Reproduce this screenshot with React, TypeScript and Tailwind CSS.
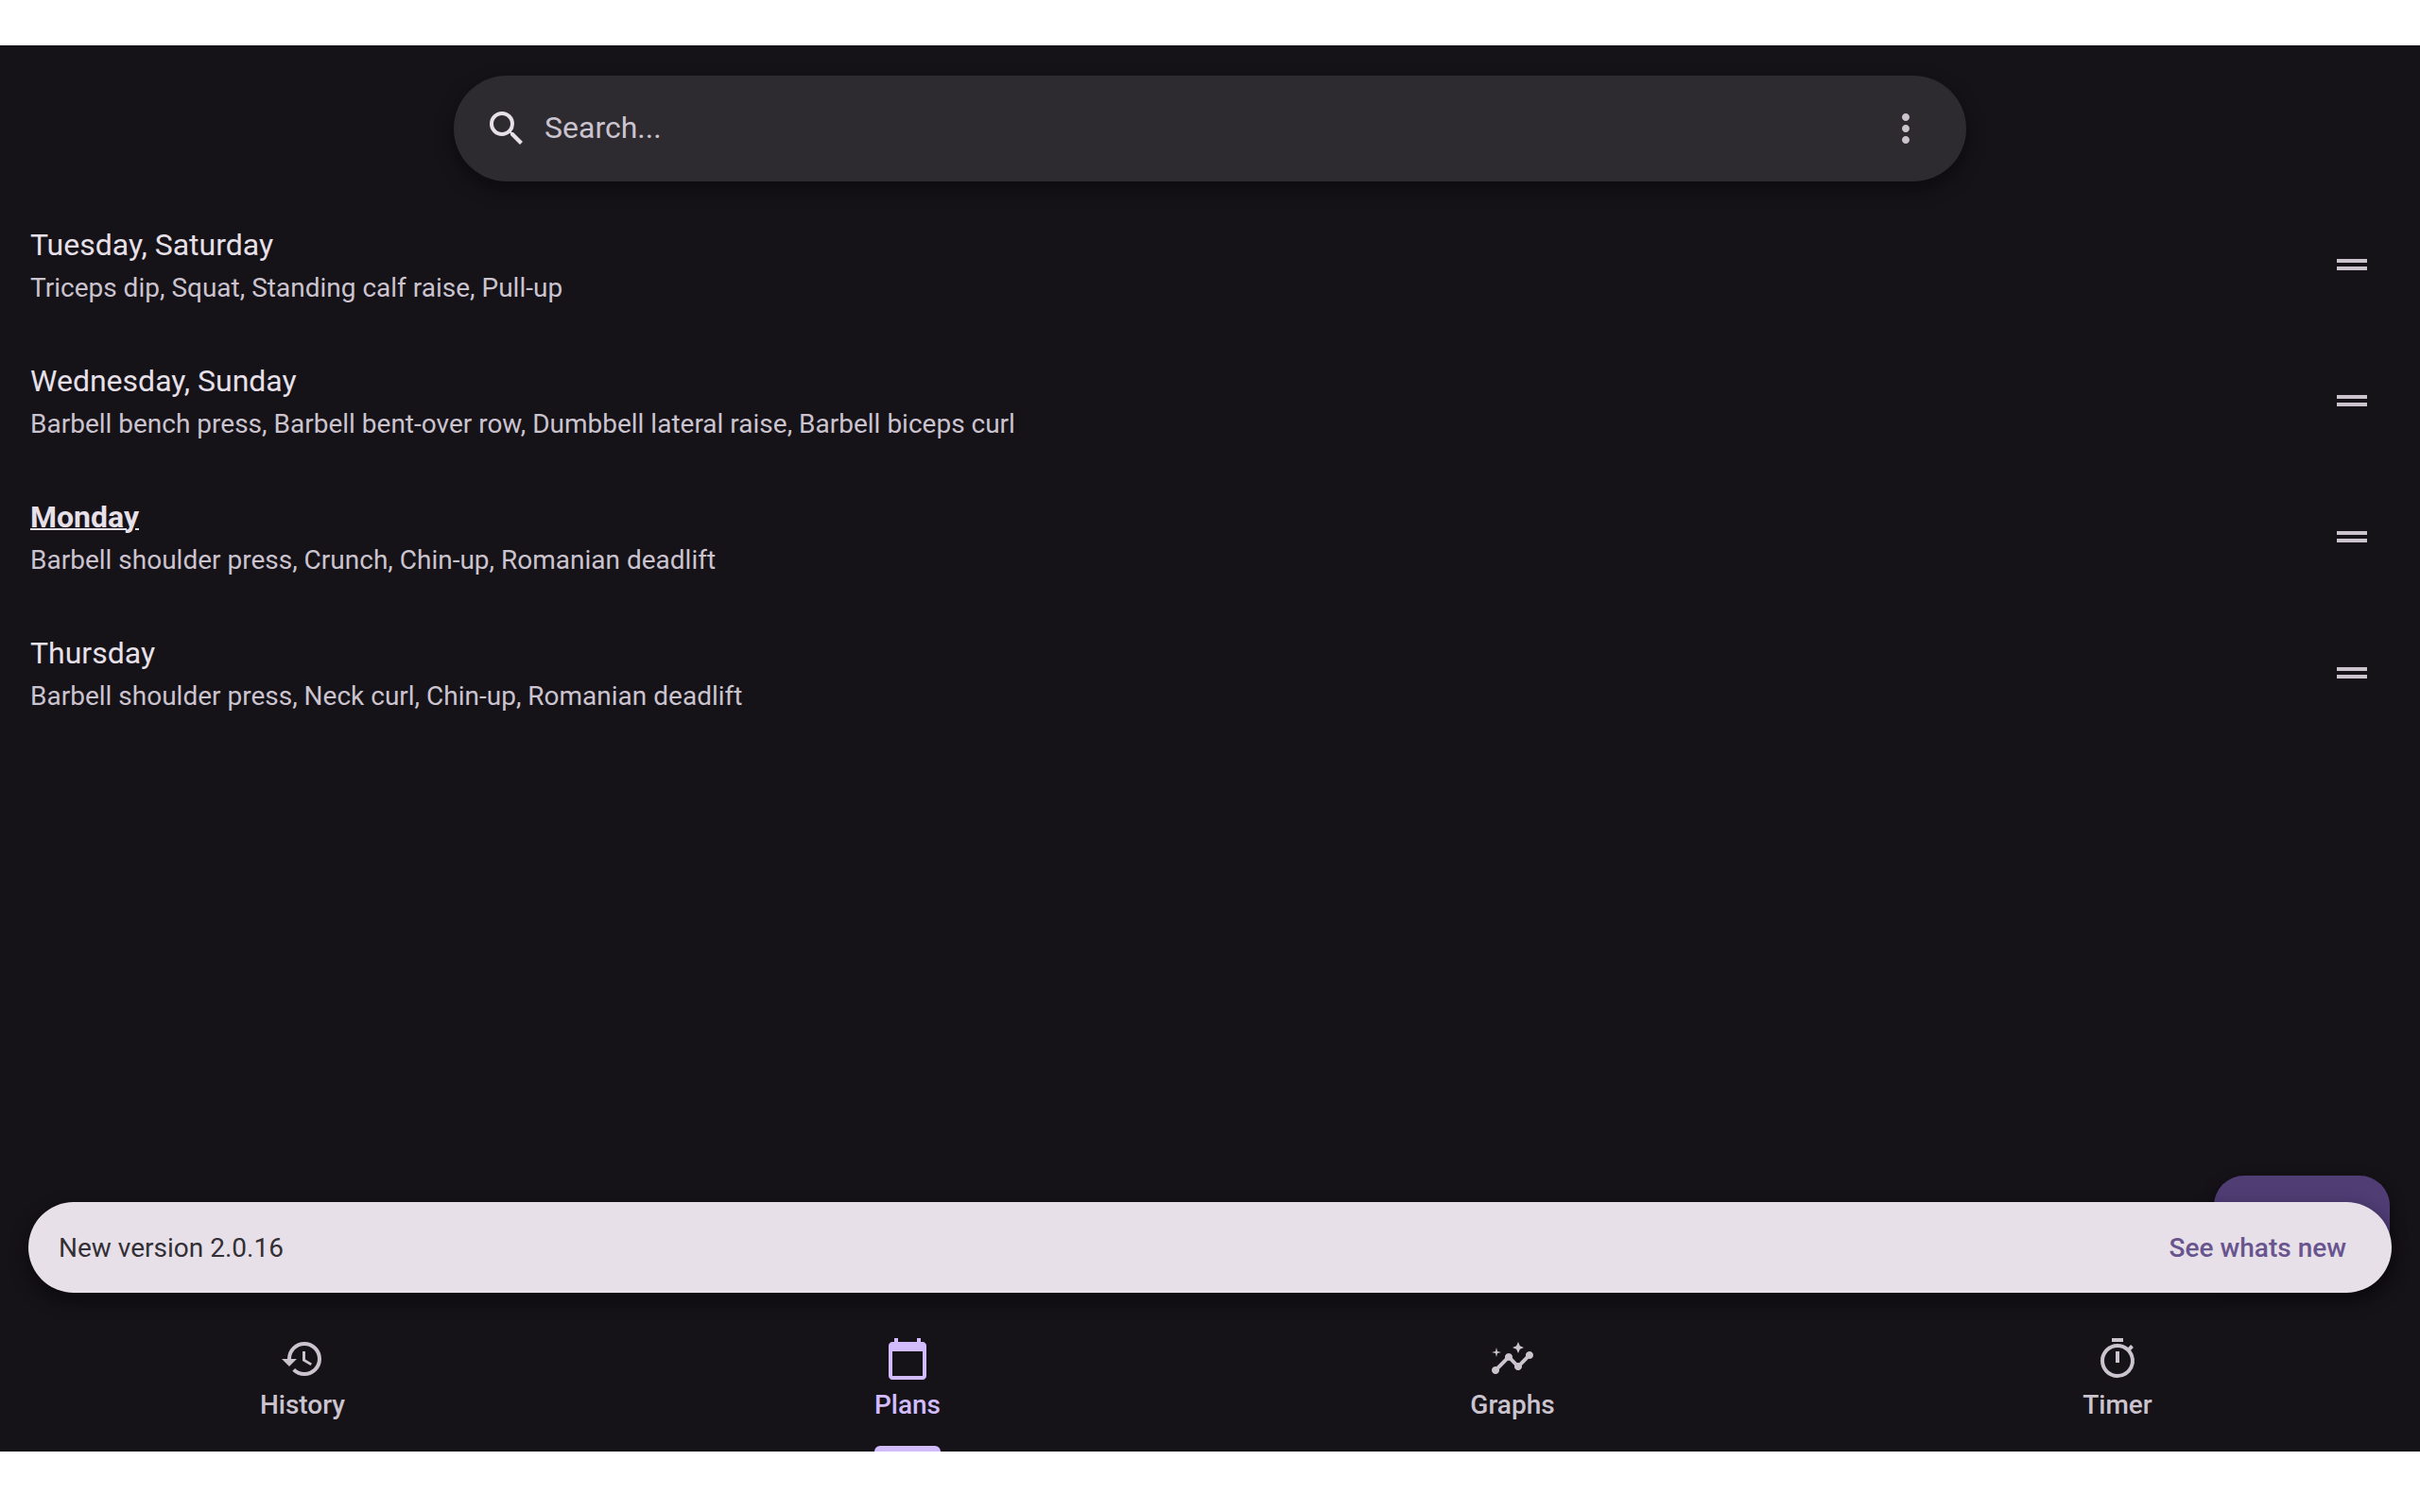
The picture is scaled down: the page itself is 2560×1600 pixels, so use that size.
import type { ReactNode } from "react";
import {
  MdCalendarToday,
  MdDragHandle,
  MdHistory,
  MdInsights,
  MdMoreVert,
  MdOutlineTimer,
  MdSearch,
} from "react-icons/md";

type Plan = { days: string; exercises: string; today?: boolean };

const plans: Plan[] = [
  { days: "Tuesday, Saturday", exercises: "Triceps dip, Squat, Standing calf raise, Pull-up" },
  {
    days: "Wednesday, Sunday",
    exercises: "Barbell bench press, Barbell bent-over row, Dumbbell lateral raise, Barbell biceps curl",
  },
  { days: "Monday", exercises: "Barbell shoulder press, Crunch, Chin-up, Romanian deadlift", today: true },
  { days: "Thursday", exercises: "Barbell shoulder press, Neck curl, Chin-up, Romanian deadlift" },
];

function SearchBar() {
  return (
    <div className="mx-auto flex h-28 w-full max-w-[1600px] items-center rounded-full bg-[#2d2a30] pr-10 pl-8 shadow-[0_8px_20px_rgba(0,0,0,0.4)]">
      <MdSearch className="size-12 shrink-0 text-[#e7e0e8]" aria-hidden="true" />
      <input
        type="text"
        aria-label="Search plans"
        placeholder="Search..."
        className="ml-4 h-12 min-w-0 flex-1 bg-transparent pb-0.5 text-[32px] text-[#e7e0e8] outline-none placeholder:text-[#cbc4cf]"
      />
      <button type="button" aria-label="More options" className="text-[#cbc4cf]">
        <MdMoreVert className="size-12" />
      </button>
    </div>
  );
}

function PlanRow({ plan }: { plan: Plan }) {
  return (
    <li className="flex h-36 items-center pr-12 pl-8">
      <div className="min-w-0 flex-1">
        <h2
          className={
            plan.today
              ? "text-[32px] leading-[48px] font-bold text-[#e7e0e8] underline decoration-2"
              : "text-[32px] leading-[48px] font-normal text-[#e7e0e8]"
          }
        >
          {plan.days}
        </h2>
        <p className="mt-0.5 text-[28px] leading-10 text-[#cbc4cf]">{plan.exercises}</p>
      </div>
      <button type="button" aria-label={`Reorder ${plan.days}`} className="text-[#cbc4cf]">
        <MdDragHandle className="size-12" />
      </button>
    </li>
  );
}

function NavTab({ icon, label, active }: { icon: ReactNode; label: string; active?: boolean }) {
  return (
    <a
      href={`#${label.toLowerCase()}`}
      aria-current={active ? "page" : undefined}
      className={
        active
          ? "flex flex-1 flex-col items-center text-[#d3bcfd]"
          : "flex flex-1 flex-col items-center text-[#cbc4cf]"
      }
    >
      {icon}
      <span className="mt-1 flex flex-col text-[28px] leading-[42px] font-medium">
        {label}
        <span className={active ? "mt-[22px] h-1.5 rounded-t-md bg-[#d3bcfd]" : "mt-[22px] h-1.5"} />
      </span>
    </a>
  );
}

export default function App() {
  return (
    <div className="flex min-h-screen flex-col bg-white pt-12 pb-16 font-[Roboto,sans-serif]">
      <div className="flex flex-1 flex-col bg-[#151218]">
        <header className="px-8 pt-8">
          <SearchBar />
        </header>
        <main className="flex-1 pt-4">
          <ul>
            {plans.map((plan) => (
              <PlanRow key={plan.days} plan={plan} />
            ))}
          </ul>
        </main>
        <div className="relative mx-[30px] mb-[46px]">
          <button
            type="button"
            aria-label="Add plan"
            className="absolute -top-7 right-0.5 h-28 w-[186px] rounded-[32px] bg-[#4f3d74] shadow-[0_6px_16px_rgba(0,0,0,0.4)]"
          />
          <div
            role="status"
            className="relative flex h-24 items-center justify-between rounded-full bg-[#e7e0e8] pt-0.5 pr-12 pl-8 text-[28px] leading-10 shadow-[0_8px_20px_rgba(0,0,0,0.45)]"
          >
            <span className="text-[#322f35]">New version 2.0.16</span>
            <button type="button" className="font-medium text-[#68548e]">
              See whats new
            </button>
          </div>
        </div>
        <nav aria-label="Main" className="flex">
          <NavTab icon={<MdHistory className="size-12" />} label="History" />
          <NavTab icon={<MdCalendarToday className="size-12" />} label="Plans" active />
          <NavTab icon={<MdInsights className="size-12" />} label="Graphs" />
          <NavTab icon={<MdOutlineTimer className="size-12" />} label="Timer" />
        </nav>
      </div>
    </div>
  );
}
